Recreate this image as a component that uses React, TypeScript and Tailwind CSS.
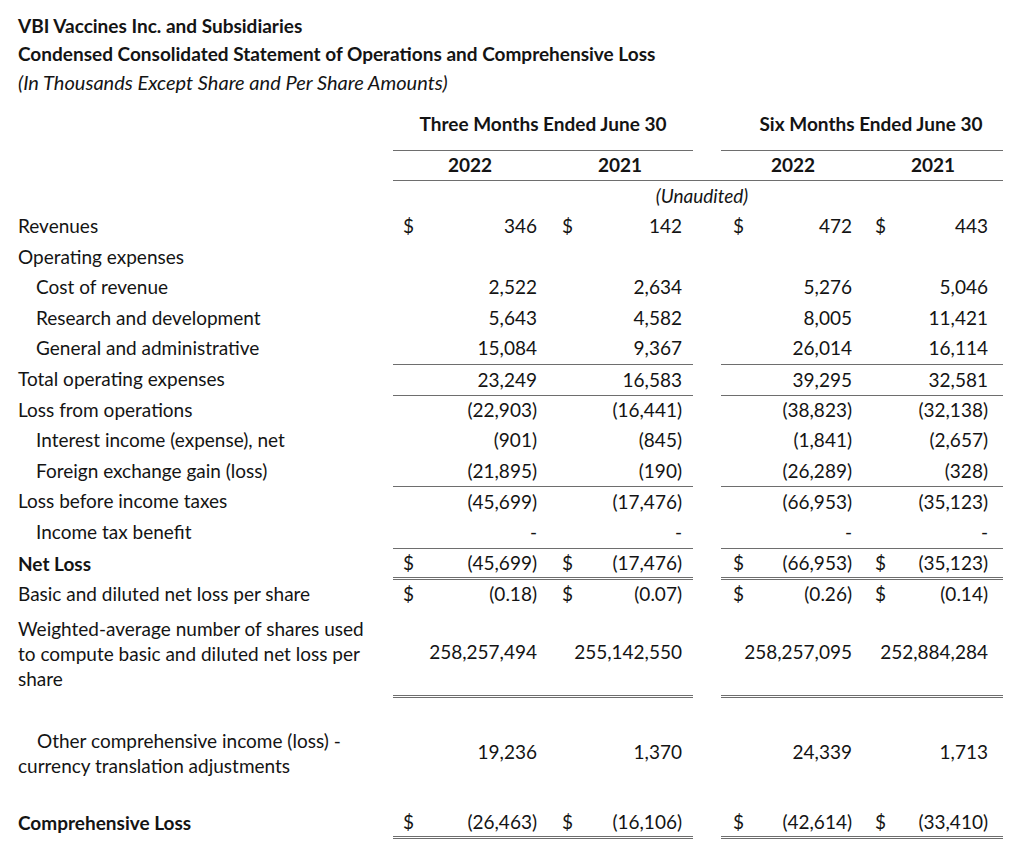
import type { ReactNode } from 'react';
import clsx from 'clsx';

interface RowDef {
  label: ReactNode;
  indent?: boolean;
  bold?: boolean;
  vals?: string[];
  dollar?: boolean;
  lineTop?: boolean;
  lineDouble?: boolean;
  h: string;
}

const cols = 'grid grid-cols-[375px_169px_131px_28px_154px_128px]';
const rule = 'border-[#6e6e6e]';

const rows: RowDef[] = [
  { label: 'Revenues', vals: ['346', '142', '472', '443'], dollar: true, h: 'h-[30.6px]' },
  { label: 'Operating expenses', h: 'h-[30.6px]' },
  { label: 'Cost of revenue', indent: true, vals: ['2,522', '2,634', '5,276', '5,046'], h: 'h-[30.6px]' },
  { label: 'Research and development', indent: true, vals: ['5,643', '4,582', '8,005', '11,421'], h: 'h-[30.6px]' },
  { label: 'General and administrative', indent: true, vals: ['15,084', '9,367', '26,014', '16,114'], h: 'h-[30.6px]' },
  { label: 'Total operating expenses', vals: ['23,249', '16,583', '39,295', '32,581'], lineTop: true, h: 'h-[30.6px]' },
  { label: 'Loss from operations', vals: ['(22,903)', '(16,441)', '(38,823)', '(32,138)'], lineTop: true, h: 'h-[30.6px]' },
  { label: 'Interest income (expense), net', indent: true, vals: ['(901)', '(845)', '(1,841)', '(2,657)'], h: 'h-[30.6px]' },
  { label: 'Foreign exchange gain (loss)', indent: true, vals: ['(21,895)', '(190)', '(26,289)', '(328)'], h: 'h-[30.6px]' },
  { label: 'Loss before income taxes', vals: ['(45,699)', '(17,476)', '(66,953)', '(35,123)'], lineTop: true, h: 'h-[30.6px]' },
  { label: 'Income tax benefit', indent: true, vals: ['-', '-', '-', '-'], h: 'h-[30.6px]' },
  { label: 'Net Loss', bold: true, vals: ['(45,699)', '(17,476)', '(66,953)', '(35,123)'], dollar: true, lineTop: true, lineDouble: true, h: 'h-[31px]' },
  { label: 'Basic and diluted net loss per share', vals: ['(0.18)', '(0.07)', '(0.26)', '(0.14)'], dollar: true, h: 'h-[31px]' },
  {
    label: (
      <span className="block leading-[25px]">
        Weighted-average number of shares used
        <br />
        to compute basic and diluted net loss per
        <br />
        share
      </span>
    ),
    vals: ['258,257,494', '255,142,550', '258,257,095', '252,884,284'],
    lineDouble: true,
    h: 'h-[88px]',
  },
  {
    label: (
      <span className="block leading-[25px] indent-[19px]">
        Other comprehensive income (loss) -
        <br />
        currency translation adjustments
      </span>
    ),
    vals: ['19,236', '1,370', '24,339', '1,713'],
    h: 'h-[110px]',
  },
  { label: 'Comprehensive Loss', bold: true, vals: ['(26,463)', '(16,106)', '(42,614)', '(33,410)'], dollar: true, lineDouble: true, h: 'h-[29px]' },
];

const pads = ['pl-[10px] pr-[25px]', 'pl-0 pr-[11px]', 'pl-[12px] pr-[23px]', 'pl-0 pr-[15px]'];

function ValueCell({ value, dollar, idx, row }: { value?: string; dollar?: boolean; idx: number; row: RowDef }) {
  return (
    <div
      className={clsx(
        'flex items-center',
        pads[idx],
        row.lineTop && `border-t ${rule}`,
        row.lineDouble && `border-b-[3px] border-double ${rule}`
      )}
    >
      {dollar && <span>$</span>}
      <span className="ml-auto">{value}</span>
    </div>
  );
}

function Row({ row }: { row: RowDef }) {
  const v = row.vals ?? [];
  return (
    <div className={clsx(cols, row.h)}>
      <div className={clsx('flex items-center', row.indent && 'pl-[18px]', row.bold && 'font-bold')}>{row.label}</div>
      <ValueCell value={v[0]} dollar={row.dollar} idx={0} row={row} />
      <ValueCell value={v[1]} dollar={row.dollar} idx={1} row={row} />
      <div />
      <ValueCell value={v[2]} dollar={row.dollar} idx={2} row={row} />
      <ValueCell value={v[3]} dollar={row.dollar} idx={3} row={row} />
    </div>
  );
}

export default function App() {
  return (
    <div className="w-[1024px] h-[856px] bg-white text-[#141414] font-['Lato',sans-serif] text-[19px] pl-[18px] overflow-hidden">
      <div className="pt-[12px] leading-[28px]">
        <div className="font-bold">VBI Vaccines Inc. and Subsidiaries</div>
        <div className="font-bold">Condensed Consolidated Statement of Operations and Comprehensive Loss</div>
        <div className="italic text-[20px]">(In Thousands Except Share and Per Share Amounts)</div>
      </div>

      <div className={clsx(cols, 'font-bold leading-[28px]')}>
        <div />
        <div className={`col-span-2 text-center pt-[14px] pb-[12px] border-b ${rule}`}>Three Months Ended June 30</div>
        <div />
        <div className={`col-span-2 text-center pt-[14px] pb-[12px] pl-[18px] border-b ${rule}`}>Six Months Ended June 30</div>
      </div>

      <div className={clsx(cols, 'font-bold h-[30px]')}>
        <div />
        <div className={`flex items-center justify-center pr-[15px] border-b ${rule}`}>2022</div>
        <div className={`flex items-center justify-center pr-[15px] border-b ${rule}`}>2021</div>
        <div className={`border-b ${rule}`} />
        <div className={`flex items-center justify-center pr-[10px] border-b ${rule}`}>2022</div>
        <div className={`flex items-center justify-center pr-[12px] border-b ${rule}`}>2021</div>
      </div>

      <div className={clsx(cols, 'h-[30px] italic')}>
        <div />
        <div className="col-span-5 flex items-center justify-center pl-[8px]">(Unaudited)</div>
      </div>

      {rows.map((r, i) => (
        <Row key={i} row={r} />
      ))}
    </div>
  );
}
